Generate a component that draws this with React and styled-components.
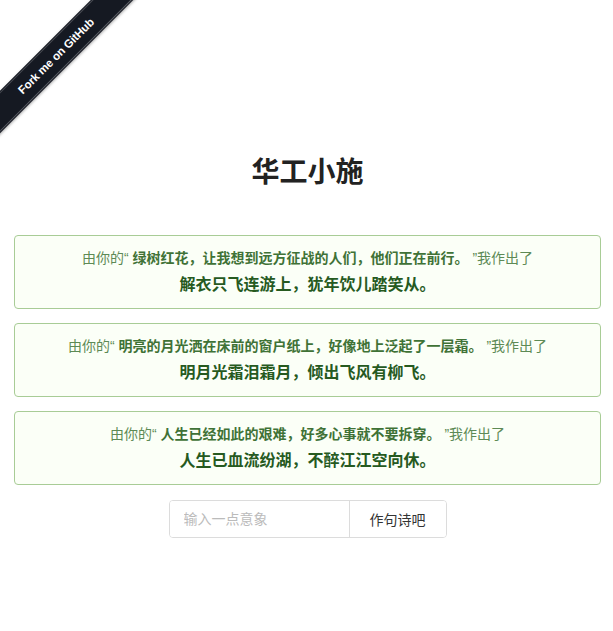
import React from "react";
import styled, { createGlobalStyle } from "styled-components";

const Global = createGlobalStyle`
  html, body { margin: 0; padding: 0; background: #fff; }
  body { font-family: "Liberation Sans", "Noto Sans CJK SC", sans-serif; color: #333; }
`;

const Page = styled.div`
  position: relative;
  width: 613px;
  min-height: 631px;
  box-sizing: border-box;
  padding: 150px 12px 0 14px;
  display: flex;
  flex-direction: column;
  align-items: stretch;
`;

const RibbonWrap = styled.div`
  position: absolute;
  left: 0;
  top: 0;
  width: 150px;
  height: 150px;
  overflow: hidden;
  pointer-events: none;
`;

const Ribbon = styled.a`
  position: absolute;
  left: -44px;
  top: 41px;
  width: 200px;
  height: 30px;
  transform: rotate(-45deg);
  background: #151922;
  box-shadow: 1px 1px 3px rgba(0, 0, 0, 0.35);
  display: flex;
  align-items: center;
  justify-content: center;
  text-decoration: none;
  &::before {
    content: "";
    position: absolute;
    left: 0;
    right: 0;
    top: 1px;
    bottom: 1px;
    border-top: 1px solid rgba(255, 255, 255, 0.22);
    border-bottom: 1px solid rgba(255, 255, 255, 0.3);
  }
  span {
    color: #fff;
    font-family: "Liberation Sans", sans-serif;
    font-weight: bold;
    font-size: 11.5px;
    letter-spacing: -0.1px;
  }
`;

const Title = styled.h1`
  margin: 0 0 45px;
  height: 40px;
  line-height: 40px;
  text-align: center;
  font-size: 28px;
  font-weight: bold;
  color: #222;
  font-family: "Noto Sans CJK SC", sans-serif;
`;

const Card = styled.div`
  border: 1px solid #a8cc96;
  border-radius: 4px;
  background: #fbfff7;
  padding: 12px 10px 11px;
  margin-bottom: 14px;
  text-align: center;
`;

const Prompt = styled.div`
  font-size: 14px;
  line-height: 20px;
  color: #5d8a55;
  b {
    color: #3f7236;
    font-weight: bold;
  }
`;

const Poem = styled.div`
  margin-top: 5px;
  font-size: 16px;
  line-height: 24px;
  font-weight: bold;
  color: #265a1f;
`;

const Form = styled.div`
  display: flex;
  justify-content: center;
  margin-top: 1px;
`;

const Group = styled.div`
  display: flex;
  height: 38px;
  border: 1px solid #dcdcdc;
  border-radius: 4px;
  box-sizing: border-box;
  overflow: hidden;
`;

const Input = styled.input`
  width: 179px;
  border: none;
  outline: none;
  padding: 0 14px;
  box-sizing: border-box;
  font-size: 14px;
  font-family: "Liberation Sans", "Noto Sans CJK SC", sans-serif;
  color: #333;
  &::placeholder { color: #bbb; }
`;

const Button = styled.button`
  width: 97px;
  border: none;
  border-left: 1px solid #dcdcdc;
  background: #fff;
  font-size: 14px;
  color: #333;
  font-family: "Liberation Sans", "Noto Sans CJK SC", sans-serif;
  cursor: pointer;
  padding: 0;
`;

const items = [
  { q: "绿树红花，让我想到远方征战的人们，他们正在前行。", p: "解衣只飞连游上，犹年饮儿踏笑从。" },
  { q: "明亮的月光洒在床前的窗户纸上，好像地上泛起了一层霜。", p: "明月光霜泪霜月，倾出飞风有柳飞。" },
  { q: "人生已经如此的艰难，好多心事就不要拆穿。", p: "人生已血流纷湖，不醉江江空向休。" },
];

export default function App() {
  return (
    <Page>
      <Global />
      <RibbonWrap>
        <Ribbon href="#"><span>Fork me on GitHub</span></Ribbon>
      </RibbonWrap>
      <Title>华工小施</Title>
      {items.map((it, i) => (
        <Card key={i}>
          <Prompt>由你的“ <b>{it.q}</b> ”我作出了</Prompt>
          <Poem>{it.p}</Poem>
        </Card>
      ))}
      <Form>
        <Group>
          <Input placeholder="输入一点意象" />
          <Button>作句诗吧</Button>
        </Group>
      </Form>
    </Page>
  );
}
